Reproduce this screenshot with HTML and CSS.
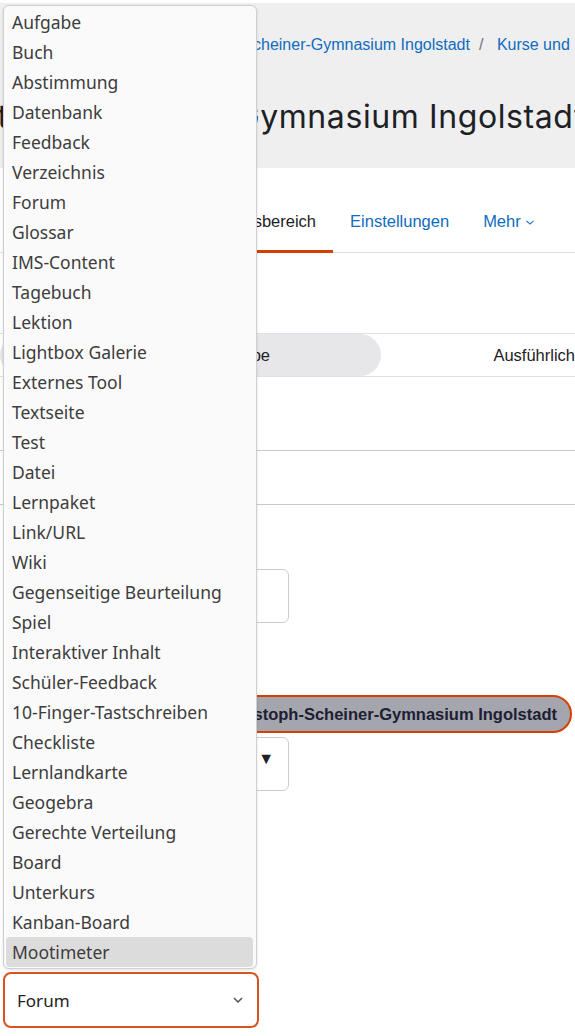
FILE: index.html
```html
<!DOCTYPE html>
<html lang="de">
<head>
  <meta charset="UTF-8">
  <title>Kursbereich</title>
  <link rel="stylesheet" href="styles.css">
</head>
<body>
  <div class="page">
    <header class="hero">
      <nav class="crumbs">
        <a href="#">Startseite</a><span class="sep">/</span>
        <a href="#">Christoph-Scheiner-Gymnasium Ingolstadt</a><span class="sep">/</span>
        <a href="#">Kurse und Planung</a>
      </nav>
      <h1>Christoph-Scheiner-Gymnasium Ingolstadt</h1>
    </header>

    <ul class="tabs">
      <li><a href="#" class="active">Kursbereich</a></li>
      <li><a href="#">Einstellungen</a></li>
      <li><a href="#">Mehr <svg class="caret" width="8" height="5" viewBox="0 0 8 5"><path d="M0.5 0.8l3.5 3.3 3.5-3.3" fill="none" stroke="#0f6cbf" stroke-width="1.1"/></svg></a></li>
    </ul>

    <div class="views">
      <span class="seg on">Gruppe</span>
      <span class="seg">Ausführlich</span>
    </div>

    <div class="row"></div>
    <div class="row short"></div>

    <div class="field"></div>

    <div class="tag">Christoph-Scheiner-Gymnasium Ingolstadt</div>

    <div class="field drop"><span class="tri">&#9660;</span></div>
  </div>

  <div class="picker">
    <ul class="options">
      <li>Aufgabe</li>
      <li>Buch</li>
      <li>Abstimmung</li>
      <li>Datenbank</li>
      <li>Feedback</li>
      <li>Verzeichnis</li>
      <li>Forum</li>
      <li>Glossar</li>
      <li>IMS-Content</li>
      <li>Tagebuch</li>
      <li>Lektion</li>
      <li>Lightbox Galerie</li>
      <li>Externes Tool</li>
      <li>Textseite</li>
      <li>Test</li>
      <li>Datei</li>
      <li>Lernpaket</li>
      <li>Link/URL</li>
      <li>Wiki</li>
      <li>Gegenseitige Beurteilung</li>
      <li>Spiel</li>
      <li>Interaktiver Inhalt</li>
      <li>Schüler-Feedback</li>
      <li>10-Finger-Tastschreiben</li>
      <li>Checkliste</li>
      <li>Lernlandkarte</li>
      <li>Geogebra</li>
      <li>Gerechte Verteilung</li>
      <li>Board</li>
      <li>Unterkurs</li>
      <li>Kanban-Board</li>
      <li class="hover">Mootimeter</li>
    </ul>
    <div class="select">
      <span>Forum</span>
      <svg width="10" height="6" viewBox="0 0 10 6"><path d="M1 1l4 4 4-4" fill="none" stroke="#555" stroke-width="1.5"/></svg>
    </div>
  </div>
</body>
</html>
```

FILE: styles.css
```css
body {
  margin: 0;
  font-family: "Liberation Sans", Arial, sans-serif;
  color: #1d2125;
  background: #fff;
  height: 1036px;
  overflow: hidden;
  position: relative;
}
.page {
  padding-top: 3px;
}
.hero {
  background: #efefef;
  height: 165px;
  padding-top: 32px;
  box-sizing: border-box;
  overflow: hidden;
  white-space: nowrap;
}
.crumbs {
  font-size: 16px;
  line-height: 20px;
  margin-left: 74px;
}
.crumbs a {
  color: #0f6cbf;
  text-decoration: none;
}
.sep {
  color: #6a737b;
  margin: 0 9px;
}
.hero h1 {
  font-family: Inter, sans-serif;
  font-weight: 400;
  font-size: 32px;
  line-height: 40px;
  letter-spacing: 0.6px;
  margin: 42px 0 0 -85px;
  color: #1d2125;
}
.tabs {
  list-style: none;
  margin: 24px 0 0;
  padding: 0 0 0 211px;
  display: flex;
  border-bottom: 1px solid #dee2e6;
}
.tabs a {
  display: block;
  padding: 19px 17px;
  line-height: 20px;
  font-size: 16.5px;
  color: #0f6cbf;
  text-decoration: none;
  border-bottom: 3px solid transparent;
  margin-bottom: -1px;
}
.tabs a.active {
  color: #1d2125;
  border-bottom-color: #d44000;
}
.caret {
  margin-left: 1px;
  vertical-align: 2px;
}
.views {
  margin-top: 80px;
  border-top: 1px solid #dee2e6;
  border-bottom: 1px solid #dee2e6;
  height: 42px;
  display: flex;
  align-items: center;
}
.seg {
  font-size: 16.5px;
  line-height: 42px;
}
.seg.on {
  background: #e7e7ea;
  border-radius: 21px;
  width: 382px;
  box-sizing: border-box;
  padding-left: 215px;
  margin-right: 112px;
}
.row {
  height: 73px;
  border-bottom: 1px solid #c9c9c9;
}
.row.short {
  height: 53px;
}
.field {
  width: 260px;
  margin: 64px 0 0 29px;
  height: 54px;
  box-sizing: border-box;
  border: 1px solid #cdcdcd;
  border-radius: 6px;
}
.tag {
  margin: 72px 0 0 20px;
  width: 552px;
  height: 38px;
  box-sizing: border-box;
  border: 2px solid #d44000;
  border-radius: 19px;
  background: #a5a5ad;
  color: #1d2033;
  font-weight: 700;
  font-size: 16.5px;
  line-height: 34px;
  text-align: right;
  padding-right: 13px;
  white-space: nowrap;
  overflow: hidden;
}
.field.drop {
  margin-top: 4px;
  position: relative;
}
.tri {
  position: absolute;
  right: 14px;
  top: 12px;
  font-size: 16px;
  color: #1d2125;
}
.picker {
  position: absolute;
  left: 3px;
  top: 5px;
  width: 256px;
  font-family: "Noto Sans", sans-serif;
}
.options {
  list-style: none;
  margin: 0;
  padding: 1px 3px 1px 2px;
  width: 254px;
  box-sizing: border-box;
  background: #fafafa;
  border: 1px solid #cfcfcf;
  border-radius: 6px;
  box-shadow: 0 1px 3px rgba(0,0,0,0.12);
}
.options li {
  height: 30px;
  line-height: 30px;
  padding-left: 6px;
  font-size: 17.5px;
  color: #3d3d3d;
  white-space: nowrap;
}
.options li.hover {
  background: #dcdcdc;
  border-radius: 4px;
}
.select {
  margin-top: 3px;
  height: 56px;
  box-sizing: border-box;
  border: 2px solid #d9531e;
  border-radius: 8px;
  background: #fff;
  display: flex;
  align-items: center;
  justify-content: space-between;
  padding: 0 14px 0 12px;
  font-size: 17px;
  color: #222;
}
```
